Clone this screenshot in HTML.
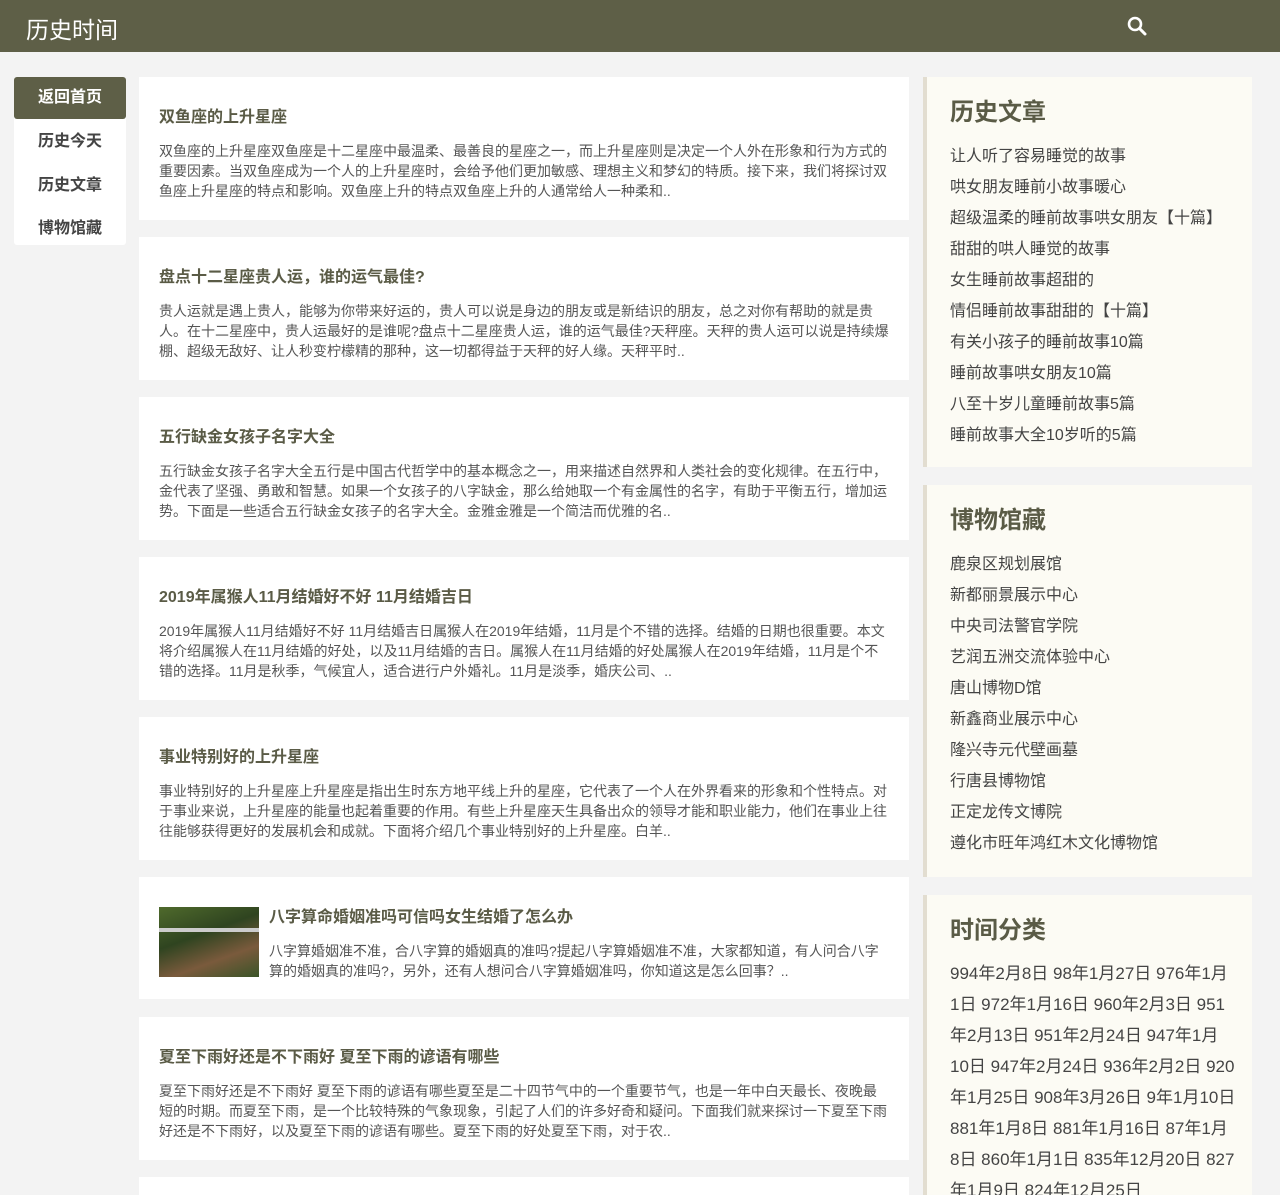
<!DOCTYPE html>
<html><head><meta charset="utf-8">
<style>
*{margin:0;padding:0;box-sizing:border-box}
html,body{width:1280px;height:1195px;overflow:hidden}
body{background:#f3f3f3;font-family:"Liberation Sans","Noto Sans CJK SC",sans-serif;color:#555;position:relative}
.hd{height:52px;background:#5e5f47;position:relative}
.hd .logo{position:absolute;left:26px;top:11px;font-size:23px;color:#fff}
.hd svg{position:absolute;left:1127px;top:16px}
.nav{position:absolute;left:14px;top:77px;width:112px;height:168px;background:#fff;border-radius:3px}
.nav div{height:42px;line-height:46px;text-align:center;font-size:16px;font-weight:bold;color:#444}
.nav div.on{background:#5e5f47;color:#fff;border-radius:3px;line-height:42px}
.card{position:absolute;left:139px;width:770px;height:143px;background:#fff;padding:0 20px}
.card h3{position:absolute;top:26px;left:20px;font-size:16px;color:#5a5b46;font-weight:bold}
.card p{position:absolute;top:64px;left:20px;right:20px;font-size:14px;line-height:20px;color:#555;height:60px;overflow:hidden}
.card .img{position:absolute;left:20px;top:30px;width:100px;height:70px;background:linear-gradient(160deg,#4f6a2c,#2f4420 40%,#7a5a3c 70%,#3a5428)}
.card .img:after{content:"";position:absolute;left:0;right:0;top:21px;height:4px;background:#ccc}
.side{position:absolute;left:923px;width:329px;background:#fcfbf4;border-left:4px solid #e2ddd0;padding-left:23px}
.side h2{font-size:24px;font-weight:bold;color:#5a5b46;position:absolute;top:15px;left:23px}
.side ul{list-style:none;position:absolute;top:64px;left:23px}
.side li{font-size:16px;line-height:31px;color:#444}
.side .t{position:absolute;top:63px;left:23px;font-size:17px;line-height:31px;color:#444;white-space:nowrap}
</style></head><body>
<div class="hd"><div class="logo">历史时间</div>
<svg width="20" height="20" viewBox="0 0 20 20"><circle cx="8" cy="8" r="6" fill="none" stroke="#fff" stroke-width="2.6"/><path d="M12.5 12.5L18 18" stroke="#fff" stroke-width="3" stroke-linecap="round"/></svg></div>
<div class="nav"><div class="on">返回首页</div><div>历史今天</div><div style="line-height:50px">历史文章</div><div style="line-height:52px">博物馆藏</div></div>

<div class="card" style="top:77px"><h3>双鱼座的上升星座</h3><p>双鱼座的上升星座双鱼座是十二星座中最温柔、最善良的星座之一，而上升星座则是决定一个人外在形象和行为方式的重要因素。当双鱼座成为一个人的上升星座时，会给予他们更加敏感、理想主义和梦幻的特质。接下来，我们将探讨双鱼座上升星座的特点和影响。双鱼座上升的特点双鱼座上升的人通常给人一种柔和..</p></div>
<div class="card" style="top:237px"><h3>盘点十二星座贵人运，谁的运气最佳?</h3><p>贵人运就是遇上贵人，能够为你带来好运的，贵人可以说是身边的朋友或是新结识的朋友，总之对你有帮助的就是贵人。在十二星座中，贵人运最好的是谁呢?盘点十二星座贵人运，谁的运气最佳?天秤座。天秤的贵人运可以说是持续爆棚、超级无敌好、让人秒变柠檬精的那种，这一切都得益于天秤的好人缘。天秤平时..</p></div>
<div class="card" style="top:397px"><h3>五行缺金女孩子名字大全</h3><p>五行缺金女孩子名字大全五行是中国古代哲学中的基本概念之一，用来描述自然界和人类社会的变化规律。在五行中，金代表了坚强、勇敢和智慧。如果一个女孩子的八字缺金，那么给她取一个有金属性的名字，有助于平衡五行，增加运势。下面是一些适合五行缺金女孩子的名字大全。金雅金雅是一个简洁而优雅的名..</p></div>
<div class="card" style="top:557px"><h3>2019年属猴人11月结婚好不好 11月结婚吉日</h3><p>2019年属猴人11月结婚好不好 11月结婚吉日属猴人在2019年结婚，11月是个不错的选择。结婚的日期也很重要。本文将介绍属猴人在11月结婚的好处，以及11月结婚的吉日。属猴人在11月结婚的好处属猴人在2019年结婚，11月是个不错的选择。11月是秋季，气候宜人，适合进行户外婚礼。11月是淡季，婚庆公司、..</p></div>
<div class="card" style="top:717px"><h3>事业特别好的上升星座</h3><p>事业特别好的上升星座上升星座是指出生时东方地平线上升的星座，它代表了一个人在外界看来的形象和个性特点。对于事业来说，上升星座的能量也起着重要的作用。有些上升星座天生具备出众的领导才能和职业能力，他们在事业上往往能够获得更好的发展机会和成就。下面将介绍几个事业特别好的上升星座。白羊..</p></div>
<div class="card" style="top:877px;height:122px"><div class="img"></div><h3 style="left:130px">八字算命婚姻准吗可信吗女生结婚了怎么办</h3><p style="left:130px;height:40px">八字算婚姻准不准，合八字算的婚姻真的准吗?提起八字算婚姻准不准，大家都知道，有人问合八字算的婚姻真的准吗?，另外，还有人想问合八字算婚姻准吗，你知道这是怎么回事？..</p></div>
<div class="card" style="top:1017px"><h3>夏至下雨好还是不下雨好 夏至下雨的谚语有哪些</h3><p>夏至下雨好还是不下雨好 夏至下雨的谚语有哪些夏至是二十四节气中的一个重要节气，也是一年中白天最长、夜晚最短的时期。而夏至下雨，是一个比较特殊的气象现象，引起了人们的许多好奇和疑问。下面我们就来探讨一下夏至下雨好还是不下雨好，以及夏至下雨的谚语有哪些。夏至下雨的好处夏至下雨，对于农..</p></div>
<div class="card" style="top:1177px;height:18px"></div>

<div class="side" style="top:77px;height:390px"><h2>历史文章</h2><ul>
<li>让人听了容易睡觉的故事</li><li>哄女朋友睡前小故事暖心</li><li>超级温柔的睡前故事哄女朋友【十篇】</li><li>甜甜的哄人睡觉的故事</li><li>女生睡前故事超甜的</li><li>情侣睡前故事甜甜的【十篇】</li><li>有关小孩子的睡前故事10篇</li><li>睡前故事哄女朋友10篇</li><li>八至十岁儿童睡前故事5篇</li><li>睡前故事大全10岁听的5篇</li></ul></div>
<div class="side" style="top:485px;height:392px"><h2>博物馆藏</h2><ul>
<li>鹿泉区规划展馆</li><li>新都丽景展示中心</li><li>中央司法警官学院</li><li>艺润五洲交流体验中心</li><li>唐山博物D馆</li><li>新鑫商业展示中心</li><li>隆兴寺元代壁画墓</li><li>行唐县博物馆</li><li>正定龙传文博院</li><li>遵化市旺年鸿红木文化博物馆</li></ul></div>
<div class="side" style="top:895px;height:300px"><h2>时间分类</h2><div class="t">994年2月8日 98年1月27日 976年1月<br>1日 972年1月16日 960年2月3日 951<br>年2月13日 951年2月24日 947年1月<br>10日 947年2月24日 936年2月2日 920<br>年1月25日 908年3月26日 9年1月10日<br>881年1月8日 881年1月16日 87年1月<br>8日 860年1月1日 835年12月20日 827<br>年1月9日 824年12月25日</div></div>
</body></html>
